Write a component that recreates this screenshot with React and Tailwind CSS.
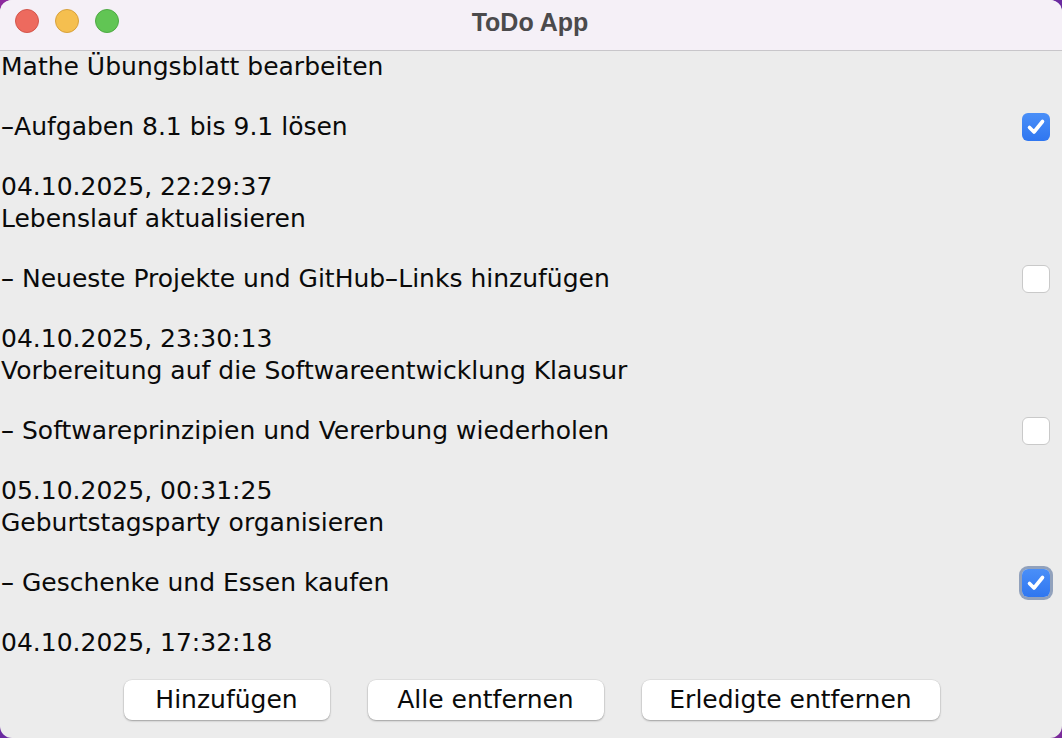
import React from "react";

const items = [
  { title: "Mathe Übungsblatt bearbeiten", desc: "-Aufgaben 8.1 bis 9.1 lösen", time: "04.10.2025, 22:29:37", done: true },
  { title: "Lebenslauf aktualisieren", desc: "- Neueste Projekte und GitHub-Links hinzufügen", time: "04.10.2025, 23:30:13", done: false },
  { title: "Vorbereitung auf die Softwareentwicklung Klausur", desc: "- Softwareprinzipien und Vererbung wiederholen", time: "05.10.2025, 00:31:25", done: false },
  { title: "Geburtstagsparty organisieren", desc: "- Geschenke und Essen kaufen", time: "04.10.2025, 17:32:18", done: true, focus: true },
];

function Txt({ s }) {
  const parts = s.split("-");
  return (
    <>
      {parts.map((p, i) => (
        <React.Fragment key={i}>
          {i > 0 && <span className="inline-block px-[2px] scale-x-[1.6]">-</span>}
          {p}
        </React.Fragment>
      ))}
    </>
  );
}

function Check({ checked, focus }) {
  if (checked) {
    return (
      <div className={`w-[28px] h-[28px] rounded-[6px] bg-gradient-to-b from-[#4a8ff8] to-[#2f76f0] flex items-center justify-center ${focus ? "ring-[3px] ring-[#7b8fb0]/80" : ""}`}>
        <svg width="24" height="24" viewBox="0 0 24 24">
          <path d="M5.5 12.5 L10 17 L18.5 6.5" fill="none" stroke="white" strokeWidth="3.6" strokeLinecap="round" strokeLinejoin="round" />
        </svg>
      </div>
    );
  }
  return <div className="w-[28px] h-[28px] rounded-[6px] bg-white border border-[#c9c9c9]" />;
}

const buttons = [
  { label: "Hinzufügen", w: "w-[206px]" },
  { label: "Alle entfernen", w: "w-[236px]" },
  { label: "Erledigte entfernen", w: "w-[298px]" },
];

export default function App() {
  return (
    <div className="w-[1062px] h-[738px] bg-gradient-to-br from-[#8e2a9e] via-[#6a2aa0] to-[#7a2a9a] overflow-hidden" style={{ fontFamily: '"DejaVu Sans", "Liberation Sans", sans-serif' }}>
      <div className="w-[1062px] h-[738px] rounded-[12px] bg-[#ececec] overflow-hidden flex flex-col">
        <div className="h-[51px] bg-[#f5f0f7] border-b border-[#c8c6ca] flex items-center relative shrink-0">
          <div className="flex items-center gap-[16px] pl-[15px] pb-[8px]">
            <div className="w-[24px] h-[24px] rounded-full bg-[#ed6a5e] border border-[#d2554b]" />
            <div className="w-[24px] h-[24px] rounded-full bg-[#f5bf4f] border border-[#d7a03c]" />
            <div className="w-[24px] h-[24px] rounded-full bg-[#61c554] border border-[#4ea944]" />
          </div>
          <div className="absolute inset-x-0 top-[4px] pr-[2px] text-center text-[25px] font-bold text-[#4b4a4c]" style={{ fontFamily: '"Liberation Sans", "DejaVu Sans", sans-serif' }}>ToDo App</div>
        </div>
        <div className="flex-1 flex flex-col">
          {items.map((it, i) => (
            <div key={i} className="flex items-center h-[152px] pr-[12px]">
              <div className="flex-1 text-[25px] leading-[30px] text-[#0a0a0a] pl-[1px]">
                <div>{it.title}</div>
                <div>&nbsp;</div>
                <div><Txt s={it.desc} /></div>
                <div>&nbsp;</div>
                <div>{it.time}</div>
              </div>
              <Check checked={it.done} focus={it.focus} />
            </div>
          ))}
          <div className="flex justify-center gap-[38px] mt-[21px] pl-[1px]">
            {buttons.map((b) => (
              <div key={b.label} className={`${b.w} h-[40px] bg-white rounded-[8px] shadow-[0_1px_2px_rgba(0,0,0,0.3),0_0_0_0.5px_rgba(0,0,0,0.08)] flex items-center justify-center text-[25px] text-[#0a0a0a]`}>{b.label}</div>
            ))}
          </div>
        </div>
      </div>
    </div>
  );
}
